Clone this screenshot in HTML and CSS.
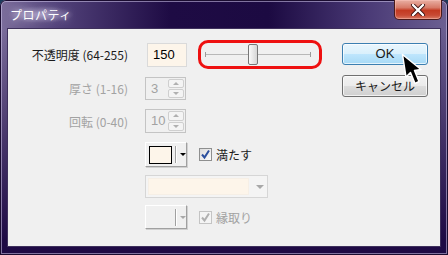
FILE: index.html
```html
<!DOCTYPE html>
<html lang="ja">
<head>
    <meta charset="UTF-8">
    <title>プロパティ</title>
    <link rel="stylesheet" href="styles.css">
</head>
<body>
    <div class="window">
        <div class="titlebar">
            <span class="title">プロパティ</span>
            <div class="close">
                <svg width="16" height="12" viewBox="0 0 16 12">
                    <path d="M3 1 L13 11 M13 1 L3 11" stroke="#3a1010" stroke-width="4" fill="none" stroke-linecap="round"/>
                    <path d="M3 1 L13 11 M13 1 L3 11" stroke="#fff" stroke-width="2.4" fill="none" stroke-linecap="round"/>
                </svg>
            </div>
        </div>
        <div class="client">
            <div class="form">
                <div class="row r1">
                    <span class="lbl">不透明度 (64-255)</span>
                    <div class="num">150</div>
                    <div class="slider">
                        <div class="track"><div class="thumb"></div></div>
                    </div>
                </div>
                <div class="row r2">
                    <span class="lbl off">厚さ (1-16)</span>
                    <div class="spin"><span class="val">3</span><div class="arrows"><i class="up"></i><i class="down"></i></div></div>
                </div>
                <div class="row r3">
                    <span class="lbl off">回転 (0-40)</span>
                    <div class="spin"><span class="val">10</span><div class="arrows"><i class="up"></i><i class="down"></i></div></div>
                </div>
                <div class="row r4 indent">
                    <div class="color"><span class="swatch"></span><span class="sep"></span><span class="caret"></span></div>
                    <label class="check"><span class="box"><svg width="11" height="11" viewBox="0 0 11 11"><path d="M2 5.5 L4.5 8.5 L9 1.5" stroke="#2b4f9e" stroke-width="2" fill="none"/></svg></span>満たす</label>
                </div>
                <div class="row r5 indent">
                    <div class="drop"><span class="fill"></span><span class="caret grey"></span></div>
                </div>
                <div class="row r6 indent">
                    <div class="color dim"><span class="blank"></span><span class="sep"></span><span class="caret grey"></span></div>
                    <label class="check off"><span class="box"><svg width="11" height="11" viewBox="0 0 11 11"><path d="M2 5.5 L4.5 8.5 L9 1.5" stroke="#b0b0b0" stroke-width="2" fill="none"/></svg></span>縁取り</label>
                </div>
            </div>
            <div class="buttons">
                <div class="btn ok">OK</div>
                <div class="btn">キャンセル</div>
            </div>
            <svg class="cursor" width="22" height="34" viewBox="0 0 22 34">
                <path d="M1.5 1.5 L5 24 L9.5 19.5 L14 30.5 L18 28.5 L13.5 17.5 L20 16.5 Z" fill="#000" stroke="#fff" stroke-width="1.5" stroke-linejoin="round"/>
            </svg>
        </div>
    </div>
</body>
</html>
```

FILE: styles.css
```css
body{
    margin: 0;
    background: #1a3a5a;
    font-family: "Noto Sans CJK JP", "Noto Sans", sans-serif;
    font-size: 12px;
}
.window{
    width: 448px;
    height: 255px;
    box-sizing: border-box;
    border-radius: 6px 6px 0 0;
    background:
        linear-gradient(180deg, rgba(30,10,66,0) 0, rgba(30,10,66,0) 30px, rgba(30,10,66,.55) 140px, #1e0a44 240px),
        linear-gradient(90deg, #7c6e9c 0, #54447c 12%, #1e0b44 38%, #1c0a42 60%, #4a3a76 82%, #6c6092 100%);
    box-shadow: inset 0 0 0 1px #1a0c30, inset 0 0 0 2px rgba(210,200,235,.55);
    display: flex;
    flex-direction: column;
    overflow: hidden;
}
.titlebar{
    height: 28px;
    display: flex;
    justify-content: space-between;
    align-items: flex-start;
    padding: 0 6px 0 8px;
}
.title{
    color: #fff;
    font-size: 12px;
    letter-spacing: 0.5px;
    margin-top: 6px;
    padding: 0 2px;
    background: radial-gradient(closest-side, rgba(220,210,245,.45), rgba(220,210,245,0));
    text-shadow: 0 0 6px rgba(255,255,255,.7), 0 0 12px rgba(230,220,255,.6);
}
.close{
    width: 48px;
    height: 20px;
    box-sizing: border-box;
    border: 1px solid #4a1a1a;
    border-top: none;
    border-radius: 0 0 5px 5px;
    background: linear-gradient(180deg, #e9b0a4 0, #d77a68 40%, #c33a22 55%, #c84a34 80%, #d87a64 100%);
    box-shadow: inset 0 0 0 1px rgba(255,200,190,.45);
    display: flex;
    align-items: center;
    justify-content: center;
}
.client{
    position: relative;
    margin: 0 7px;
    height: 219px;
    box-sizing: border-box;
    border: 1px solid #3e305c;
    background: #f0f0f0;
    display: flex;
}
.form{
    width: 334px;
    padding-top: 11px;
}
.row{
    display: flex;
    align-items: center;
}
.r1{ height: 29px; }
.r2{ height: 23px; margin-top: 8px; }
.r3{ height: 24px; margin-top: 9px; }
.r4{ height: 25px; margin-top: 9px; }
.r5{ height: 23px; margin-top: 8px; }
.r6{ height: 24px; margin-top: 7px; }
.indent{ padding-left: 137px; }
.lbl{
    width: 120px;
    margin-right: 17px;
    text-align: right;
    color: #1a1a1a;
    white-space: nowrap;
}
.lbl.off{ color: #a2a2a2; }
.num{
    width: 40px;
    height: 24px;
    margin-left: 2px;
    box-sizing: border-box;
    border: 1px solid #dadada;
    background: #fdf5ea;
    padding-left: 5px;
    line-height: 21px;
    font-family: "Liberation Sans", sans-serif;
    font-size: 13px;
}
.slider{
    margin-left: 11px;
    width: 124px;
    height: 29px;
    box-sizing: border-box;
    border: 3px solid #ee1010;
    border-radius: 10px;
    display: flex;
    align-items: center;
    padding: 0 8px 0 4px;
}
.track{
    flex: 1;
    height: 21px;
    background:
        linear-gradient(#9a9a9a, #9a9a9a) left center / 1px 5px no-repeat,
        linear-gradient(#9a9a9a, #9a9a9a) right center / 1px 5px no-repeat,
        linear-gradient(#b8b8b8, #b8b8b8) center / 100% 1px no-repeat;
}
.thumb{
    margin-left: 43px;
    width: 10px;
    height: 21px;
    box-sizing: border-box;
    border: 1px solid #777;
    border-radius: 2px;
    background: linear-gradient(90deg, #fafafa, #e4e4e4 60%, #d6d6d6);
}
.spin{
    width: 41px;
    height: 23px;
    box-sizing: border-box;
    border: 1px solid #c4c4c4;
    background: #f0f0f0;
    display: flex;
    justify-content: space-between;
}
.r3 .spin{ height: 24px; }
.val{
    color: #a2a2a2;
    padding: 2px 0 0 5px;
    line-height: 17px;
    font-family: "Liberation Sans", sans-serif;
    font-size: 13px;
}
.arrows{
    width: 16px;
    display: flex;
    flex-direction: column;
    gap: 1px;
    padding: 1px 1px 1px 0;
}
.arrows i{
    flex: 1;
    border: 1px solid #cfcfcf;
    border-radius: 2px;
    background: #f4f4f4;
    display: flex;
    align-items: center;
    justify-content: center;
}
.arrows i::after{
    content: "";
    border-left: 3px solid transparent;
    border-right: 3px solid transparent;
}
.arrows .up::after{ border-bottom: 3px solid #b0b0b0; }
.arrows .down::after{ border-top: 3px solid #b0b0b0; }
.color{
    width: 42px;
    height: 25px;
    box-sizing: border-box;
    border: 1px solid #fff;
    border-right-color: #a0a0a0;
    border-bottom-color: #a0a0a0;
    box-shadow: 1px 1px 0 #d0d0d0;
    background: #f0f0f0;
    display: flex;
    align-items: center;
    padding-left: 3px;
}
.color.dim{ height: 24px; }
.swatch{
    width: 23px;
    height: 16px;
    border: 1px solid #000;
    background: #fdf5ea;
}
.blank{ width: 25px; }
.sep{
    width: 1px;
    height: 17px;
    margin: 0 3px 0 3px;
    background: #a0a0a0;
    box-shadow: 1px 0 0 #fff;
}
.caret{
    width: 0;
    height: 0;
    margin-left: 1px;
    border-left: 3px solid transparent;
    border-right: 3px solid transparent;
    border-top: 3px solid #000;
}
.caret.grey{ border-top-color: #a8a8a8; }
.check{
    margin-left: 12px;
    display: flex;
    align-items: center;
    gap: 4px;
    color: #1a1a1a;
}
.check.off{ color: #a2a2a2; }
.box{
    width: 13px;
    height: 13px;
    box-sizing: border-box;
    border: 1px solid #8e8f8f;
    background: linear-gradient(135deg, #dcdcdc, #fbfbfb);
    display: flex;
    align-items: center;
    justify-content: center;
}
.check.off .box{ border-color: #c4c4c4; background: #f4f4f4; }
.drop{
    width: 123px;
    height: 23px;
    box-sizing: border-box;
    border: 1px solid #d6d6d6;
    background: #f4f4f4;
    display: flex;
    align-items: center;
    padding: 2px;
}
.fill{
    width: 101px;
    height: 100%;
    background: #fdf5ea;
    border: 1px solid #f6efe6;
    box-sizing: border-box;
}
.drop .caret{ margin-left: 7px; border-width: 4px 4px 0; border-left-color: transparent; border-right-color: transparent; }
.buttons{
    width: 86px;
    padding-top: 14px;
    display: flex;
    flex-direction: column;
    gap: 10px;
}
.btn{
    height: 22px;
    box-sizing: border-box;
    border: 1px solid #707070;
    border-radius: 3px;
    background: linear-gradient(180deg, #f2f2f2 0, #ebebeb 50%, #dddddd 51%, #cfcfcf 100%);
    box-shadow: inset 0 0 0 1px rgba(255,255,255,.7);
    text-align: center;
    line-height: 19px;
    color: #1a1a1a;
}
.btn.ok{
    border-color: #3c7fb1;
    background: linear-gradient(180deg, #eaf6fd 0, #d9f0fc 50%, #bee6fd 51%, #a7d9f5 100%);
    font-family: "Liberation Sans", sans-serif;
    font-size: 13px;
}
.cursor{
    position: absolute;
    left: 393px;
    top: 24px;
}
```
